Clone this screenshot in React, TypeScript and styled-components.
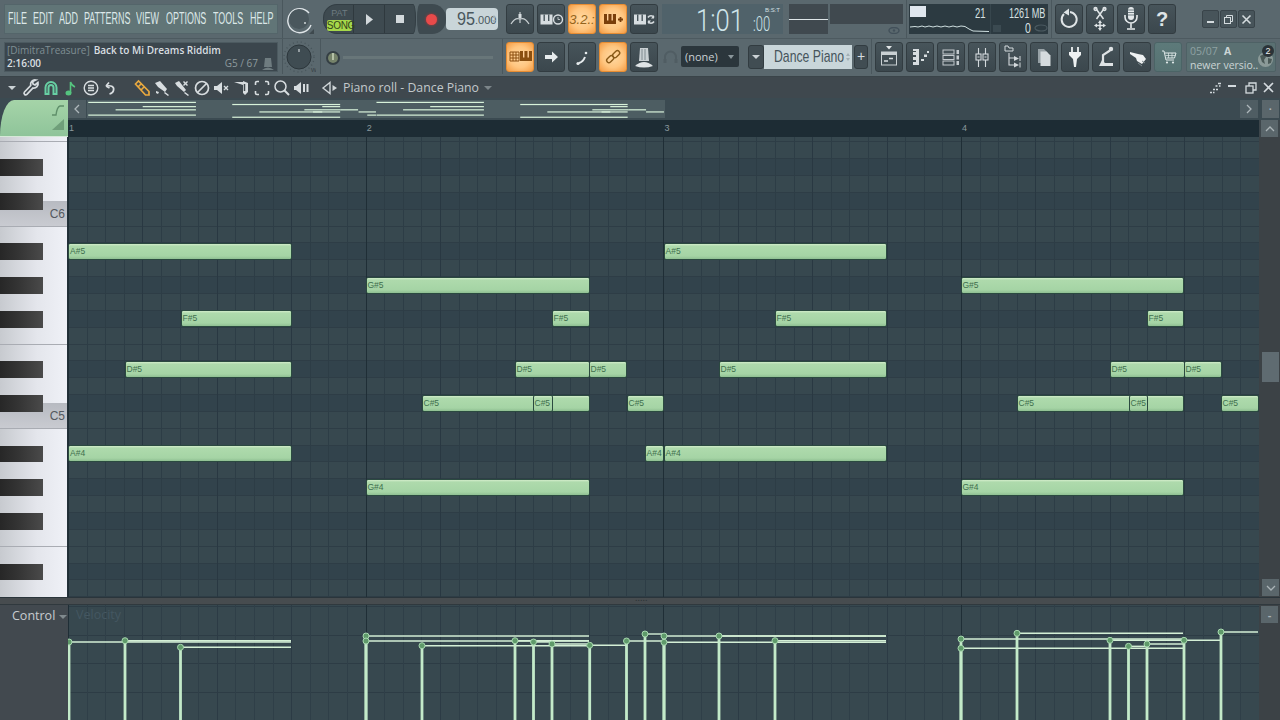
import React from "react";
import styled, { createGlobalStyle } from "styled-components";

const Global = createGlobalStyle`
  html, body { margin: 0; padding: 0; background: #36474f; }
  * { box-sizing: border-box; }
`;

const Page = styled.div`
  width: 1280px; height: 720px; overflow: hidden; display: flex; flex-direction: column;
  font-family: "Open Sans", "Liberation Sans", sans-serif; background: #3f484e;
`;
const Header = styled.header`
  height: 77px; background: #5a686e; border-bottom: 1px solid #3a4449; flex: none;
`;
const Row = styled.div<{ $second?: boolean }>`
  height: ${(p) => (p.$second ? 37 : 38)}px; display: flex; align-items: center; padding-left: 4px;
  ${(p) => (p.$second ? "border-top: 1px solid #4d5a60; padding-bottom: 1px;" : "")}
`;
const Sep = styled.div<{ $ml: number }>`
  width: 1px; margin-right: -1px; margin-left: ${(p) => p.$ml}px; align-self: stretch; background: #4a575d;
`;
const At = styled.div<{ $ml?: number }>`
  display: flex; align-items: center; flex: none; margin-left: ${(p) => p.$ml ?? 0}px;
`;
const Narrow = styled.span<{ $s: number }>`
  display: inline-block; white-space: nowrap; transform: scaleX(${(p) => p.$s}); transform-origin: left center;
`;
const Menu = styled.nav`
  width: 274px; height: 30px; background: #617577; border: 1px solid #54656a; display: flex; align-items: center;
  font: 16px "Liberation Sans", sans-serif; color: #dce8e8;
`;
const MenuItem = styled.div<{ $w: number; $ml: number }>`
  width: ${(p) => p.$w}px; margin-left: ${(p) => p.$ml}px; flex: none;
`;
const KnobSvg = styled.svg`
  display: block; flex: none;
`;
const Transport = styled.div`
  width: 93px; height: 30px; background: #3e4a50; border: 1px solid #333e44; border-radius: 14px 3px 3px 14px / 14px; display: flex;
`;
const PatSong = styled.div`
  width: 30px; display: flex; flex-direction: column; align-items: center; justify-content: space-between;
  font: 9px "Liberation Sans", sans-serif; border-right: 1px solid #2f393e; padding: 3px 0 2px 2px;
  color: #6d7b80;
`;
const SongTag = styled.div`
  width: 25px; height: 11px; background: #a6d84a; color: #34451a; text-align: center; line-height: 11px; border-radius: 2px;
  font-size: 10px; letter-spacing: -0.3px;
`;
const TransportBtn = styled.div`
  width: 31px; display: flex; align-items: center; justify-content: center; color: #d3d9dc;
  & + & { border-left: 1px solid #2f393e; }
`;
const RecordBtn = styled.div`
  width: 29px; height: 30px; background: #3e4a50; border-radius: 3px 14px 14px 3px / 14px; display: flex; align-items: center; justify-content: center; margin-left: 1px;
`;
const RecordDot = styled.div`
  width: 11px; height: 11px; border-radius: 50%; background: #e84a4a; box-shadow: 0 0 3px #b33;
`;
const Tempo = styled.div`
  width: 52px; height: 22px; background: #c9d5d9; border-radius: 4px; color: #4a575d; display: flex; align-items: baseline; padding: 1px 0 0 11px;
  font: 18px/20px "Liberation Sans", sans-serif; position: relative;
`;
const TempoSmall = styled.span`
  font-size: 11px; position: absolute; left: 29px; top: 2px;
`;
const Spin = styled.div`
  position: absolute; right: 2px; top: 50%; transform: translateY(-50%); display: flex; flex-direction: column; gap: 2px;
`;
const SpinUp = styled.span`
  width: 0; height: 0; border: 2.5px solid transparent; border-top: 0; border-bottom: 3px solid #a3b0b5;
`;
const SpinDown = styled.span`
  width: 0; height: 0; border: 2.5px solid transparent; border-bottom: 0; border-top: 3px solid #a3b0b5;
`;
const ButtonGroup = styled.div<{ $ml?: number }>`
  display: flex; gap: 3px; margin-left: ${(p) => p.$ml ?? 0}px; flex: none;
`;
const ToolButton = styled.div<{ $on?: boolean; $tint?: boolean }>`
  width: 28px; height: 30px; border-radius: 3px; display: flex; align-items: center; justify-content: center; flex: none; position: relative;
  background: ${(p) =>
    p.$on
      ? "radial-gradient(circle at 50% 50%, #ffd9a3 0%, #ffc680 55%, #f49b43 100%)"
      : p.$tint
      ? "linear-gradient(#5d7a7a, #567272)"
      : "linear-gradient(#47545a, #3b474d)"};
  border: 1px solid ${(p) => (p.$on ? "#e78d33" : p.$tint ? "#4b6466" : "#323c41")};
  color: #dfe4e6;
  font: italic 13px "Liberation Sans", sans-serif;
`;
const BtnSvg = styled.svg`
  display: block; width: 26px; height: 28px; overflow: visible;
`;
const Time = styled.div`
  width: 121px; height: 30px; background: #50626a; margin-left: 4px; position: relative; flex: none; color: #cfe5ea;
  font-family: Roboto, "Liberation Sans", sans-serif; font-weight: 300; display: flex;
`;
const TimeBig = styled.div`
  width: 57px; margin-left: 34px; font-size: 32px; line-height: 32px; height: 30px;
`;
const TimeSmall = styled.div`
  font-size: 21px; line-height: 41px; height: 30px;
`;
const TimeTag = styled.div`
  position: absolute; left: 103px; top: 2px; font: 6px/8px "Liberation Sans", sans-serif; color: #d4e0e4;
`;
const Scope = styled.div`
  width: 39px; height: 30px; background: #40494f; margin-left: 6px; display: flex; align-items: center; flex: none;
`;
const ScopeLine = styled.div`
  height: 1px; width: 100%; background: #dfe6e8;
`;
const Wave = styled.div`
  width: 73px; margin-left: 2px; height: 30px; flex: none; display: flex; flex-direction: column; align-items: flex-end;
`;
const WaveBox = styled.div`
  width: 100%; height: 20px; background: #40494f; flex: none;
`;
const EyeIcon = styled.svg`
  margin: 3px 3px 0 0;
`;
const Cpu = styled.div`
  width: 139px; height: 30px; background: #2c3a41; display: flex; color: #d6e0e2; flex: none; margin-left: 3px;
  font: 14px/14px "Liberation Sans", sans-serif;
`;
const CpuLeft = styled.div`
  width: 82px; display: flex; flex-direction: column; border-right: 1px solid #37464d;
`;
const CpuTop = styled.div`
  height: 15px; display: flex; justify-content: space-between; padding: 2px 0 0 1px;
`;
const CpuBar = styled.div`
  width: 16px; height: 11px; background: #dfe6ee;
`;
const CpuRight = styled.div`
  flex: 1; display: flex; flex-direction: column; padding: 2px 0 0 18px;
`;
const CpuLow = styled.div`
  display: flex; align-items: center; margin: 1px 0 0 -16px;
`;
const CpuSquare = styled.div`
  width: 8px; height: 7px; background: #3b4a51; margin-right: 24px; flex: none;
`;
const WindowBtn = styled.div`
  width: 17px; height: 18px; background: #47545a; border: 1px solid #39444a; border-radius: 2px; display: flex; align-items: center; justify-content: center; margin-right: 1px; color: #d4dbde;
`;
const Hint = styled.div`
  width: 274px; height: 30px; background: #3b464d; border: 1px solid #4c5a60; padding: 1px 2px 0; color: #d9dfe1;
  font-size: 10px; line-height: 13px; display: flex; flex-direction: column; justify-content: space-between; flex: none; font-weight: 600;
`;
const HintLine = styled.div`
  display: flex; align-items: center; white-space: nowrap;
`;
const Dim = styled.span`
  color: #7f8e93; font-weight: 400; margin-right: 4px;
`;
const HintRight = styled.span`
  margin-left: auto; color: #8d9a9e; display: flex; align-items: center; gap: 4px; font-weight: 400; padding-right: 1px;
`;
const Track = styled.div`
  width: 150px; height: 3px; background: #687679; margin-left: 3px; flex: none;
`;
const Combo = styled.div`
  width: 58px; height: 21px; margin-left: 3px; background: #2b363c; border-radius: 2px; color: #c9d0d3; font: 11px/21px "Open Sans", sans-serif; padding-left: 4px; position: relative; flex: none;
`;
const ComboArrow = styled.span`
  position: absolute; right: 5px; top: 9px; border: 3.5px solid transparent; border-top: 4px solid #8a969b;
`;
const ArrowBtn = styled.div`
  width: 16px; height: 24px; margin-left: 9px; background: #414d53; border: 1px solid #323c41; border-radius: 3px; display: flex; align-items: center; justify-content: center; flex: none;
`;
const Down = styled.span<{ $c?: string }>`
  width: 0; height: 0; display: inline-block; border: 4px solid transparent; border-bottom: 0; border-top: 4px solid ${(p) => p.$c ?? "#cbd2d5"};
`;
const NameBox = styled.div`
  width: 88px; height: 24px; background: #c9d6da; color: #46545b; font: 17px/24px "Liberation Sans", sans-serif; padding-left: 10px; flex: none; white-space: nowrap; position: relative;
`;
const PlusBtn = styled.div`
  width: 14px; height: 24px; margin-left: 2px; background: #414d53; border: 1px solid #323c41; border-radius: 3px; color: #d5dcdf; text-align: center; font: 14px/21px "Liberation Sans", sans-serif; flex: none;
`;
const News = styled.div`
  width: 90px; height: 30px; background: #5a7072; margin-left: 4px; border: 1px solid #4e6165; border-radius: 2px; padding: 1px 3px; font-size: 10.5px; line-height: 14px; color: #cbd5d5; position: relative; flex: none;
`;
const NewsDate = styled.span`
  color: #8fa2a3; margin-right: 6px;
`;
const Badge = styled.div`
  position: absolute; right: 1px; top: 2px; width: 12px; height: 12px; border-radius: 50%; background: #2b3338; color: #eee; text-align: center; font: 9px/12px "Liberation Sans", sans-serif;
`;
const Globe = styled.svg`
  position: absolute; right: 2px; top: 9px;
`;
const TitleBar = styled.div`
  height: 21px; background: #3f484e; display: flex; align-items: center; padding-left: 8px; flex: none; color: #cdd3d6;
`;
const ArrowSlot = styled.div`
  width: 13px; display: flex;
`;
const ToolSlot = styled.div<{ $c?: string; $ml?: number }>`
  width: 20px; height: 20px; flex: none; color: ${(p) => p.$c ?? "#cfd5d8"}; margin-left: ${(p) => p.$ml ?? 0}px;
`;
const TitleText = styled.div`
  font-size: 12.3px; color: #c3c9cc; margin-left: 3px; margin-right: 5px; white-space: nowrap;
`;
const TitleRight = styled.div`
  margin-left: auto; display: flex; padding-right: 3px;
`;
const WinSlot = styled.div`
  width: 18px; height: 20px; color: #d4dade;
`;
const Roll = styled.div`
  display: grid; grid-template-columns: 68px 1191px 21px; grid-template-rows: 22px 17px 460px 8px 115px; flex: none;
`;
const CornerCell = styled.div`
  grid-column: 1; grid-row: 1 / span 2; background: #3b4a51; padding-top: 2px; display: flex;
`;
const Corner = styled.div`
  flex: 1; background: linear-gradient(#a5d4a8, #8fc49a); border-radius: 14px 0 0 0 / 36px 0 0 0; border-bottom: 1px solid #d6e8d8; display: flex; flex-direction: column; align-items: flex-end; padding: 4px 3px 0 0; gap: 1px;
`;
const OverviewBar = styled.div`
  background: #3b4a51; padding: 2px 1px 2px 0; display: flex; gap: 1px;
`;
const StripBtn = styled.div<{ $end?: boolean }>`
  width: 18px; height: 18px; background: #4f5d63; display: flex; align-items: center; justify-content: center; color: #aeb7bb; flex: none; margin-left: ${(p) => (p.$end ? "auto" : "0")};
  font: 11px/18px "Liberation Sans", sans-serif;
`;
const OverviewClip = styled.svg`
  width: 578px; height: 18px; background: #4d5d62; display: block; flex: none;
`;
const SideCell = styled.div`
  background: #3b4a51; padding: 2px 2px 0 3px;
`;
const SideBtn = styled.div<{ $h?: number }>`
  width: 17px; height: ${(p) => p.$h ?? 17}px; background: #5a666b; display: flex; align-items: center; justify-content: center; color: #aab3b7; font: bold 11px "Liberation Sans", sans-serif; flex: none;
`;
const Ruler = styled.div`
  background: #1d2c34; display: flex; overflow: hidden;
`;
const RulerCell = styled.div`
  width: 297.7px; flex: none; font: 9px/17px "Liberation Sans", sans-serif; color: #8a989c; padding-left: 1px;
`;
const RulerCorner = styled.div`
  background: #3d464b; padding-left: 2px;
`;
const Keys = styled.div`
  background: linear-gradient(90deg, #c7cacf, #e4e6ec 55%, #eff1f7); border-right: 1px solid #233139; overflow: hidden;
`;
const RowsOffset = styled.div`
  margin-top: -11.45px;
`;
const KeyRow = styled.div<{ $line?: boolean }>`
  height: 16.85px; position: relative; ${(p) => (p.$line ? "border-bottom: 1px solid #a9acb3;" : "")}
`;
const BlackKey = styled.div`
  position: absolute; left: 0; top: 0; width: 43px; height: 100%; background: linear-gradient(90deg, #272727, #333 40%, #4a4a4a); z-index: 2;
`;
const CShade = styled.div`
  position: absolute; left: 0; right: 0; bottom: 0; height: 25px; background: linear-gradient(#b7bac1, #c9cbd1); color: #54595f; z-index: 1;
  font: 12px/26px "Liberation Sans", sans-serif; text-align: right; padding-right: 2px;
`;
const Canvas = styled.div`
  position: relative; overflow: hidden; background: #37484f;
  &::after {
    content: ""; position: absolute; inset: 0; pointer-events: none; z-index: 1;
    background-image:
      repeating-linear-gradient(90deg, #1f2e36 0 1px, transparent 1px 297.7px),
      repeating-linear-gradient(90deg, #293842 0 1px, transparent 1px 74.42px),
      repeating-linear-gradient(90deg, #2d3d46 0 1px, transparent 1px 18.605px);
  }
`;
const GridRow = styled.div<{ $black?: boolean }>`
  height: 16.85px; background: ${(p) => (p.$black ? "#32434c" : "#37484f")}; border-bottom: 1px solid #2e3d46;
`;
const Note = styled.div`
  position: absolute; height: 17px; z-index: 2; border: 1px solid #2b4a40; border-radius: 2px; overflow: hidden;
  background: linear-gradient(#d2ecca 0, #aedaac 14%, #a5d4a5 80%, #8fbf92 100%);
  font: 8.5px/15px "Liberation Sans", sans-serif; color: #3f6f4e; padding-left: 1px; white-space: nowrap;
`;
const VScroll = styled.div`
  background: #3c4246; padding: 0 2px 1px 3px; display: flex; flex-direction: column;
`;
const Thumb = styled.div`
  width: 17px; height: 30px; background: #5f6b71; margin-top: 215px; flex: none;
`;
const DownSlot = styled.div`
  margin-top: auto;
`;
const Splitter = styled.div`
  grid-column: 1 / -1; background: #474c4f; border-top: 1px solid #2a353b; border-bottom: 1px solid #30393e; display: flex; justify-content: center; padding-left: 3px; color: #2d3336; font: bold 7px/1px "Liberation Sans", sans-serif; letter-spacing: 0.6px;
`;
const Control = styled.div`
  background: #42494f; padding: 2px 0 0 12px; color: #c7ccd0; font-size: 12.5px; display: flex; align-items: flex-start; gap: 4px; line-height: 18px;
`;
const ControlArrow = styled.span`
  margin-top: 8px; display: flex;
`;
const Velocity = styled.div`
  position: relative; background: #37484f; overflow: hidden;
  background-image:
    repeating-linear-gradient(90deg, #1f2e36 0 1px, transparent 1px 297.7px),
    repeating-linear-gradient(90deg, #2c3b45 0 1px, transparent 1px 74.42px),
    repeating-linear-gradient(90deg, #2f3f48 0 1px, transparent 1px 18.605px),
    repeating-linear-gradient(0deg, transparent 0 27.4px, #2d3c45 27.4px 28.4px);
`;
const VelLabel = styled.div`
  position: absolute; left: 8px; top: 1px; font-size: 12.5px; color: #445761; line-height: 18px;
`;
const VelSvg = styled.svg`
  position: absolute; left: 0; top: 0; display: block;
`;
const ControlSide = styled.div`
  background: #3c4246; padding: 1px 0 0 2px;
`;

/* data */
const KOFF = { "A#5": 0, "G#5": 2, "F#5": 4, "D#5": 7, "C#5": 9, "A#4": 12, "G#4": 14 } as const;
type NL = keyof typeof KOFF;
const notes: [NL, number, number][] = [
  ["A#5", 68.5, 291], ["D#5", 125, 291], ["F#5", 181, 291], ["A#4", 68.5, 291],
  ["G#5", 366, 589], ["C#5", 422, 589], ["G#4", 366, 589], ["D#5", 515, 589], ["C#5", 533, 552], ["F#5", 552, 589], ["D#5", 589, 626], ["C#5", 627, 663], ["A#4", 645, 663],
  ["A#5", 664, 886], ["A#4", 664, 886], ["D#5", 719, 886], ["F#5", 775, 886],
  ["G#5", 961, 1183], ["G#4", 961, 1183], ["C#5", 1017, 1183], ["D#5", 1110, 1184], ["C#5", 1129, 1147], ["F#5", 1147, 1183], ["D#5", 1184, 1221], ["C#5", 1221, 1258],
];
const vel: [number, number, number][] = [
  [69, 642, 291], [125, 640.7, 291], [180.5, 647.3, 291],
  [366, 636, 589], [366, 641, 589], [422, 645.7, 589], [515, 640.7, 589], [533.5, 642, 552], [552, 644, 589], [589.7, 645.3, 626], [626.5, 641, 663], [645, 634, 663],
  [664, 636, 886], [664, 642.3, 886], [719, 636, 886], [775, 640.7, 886],
  [961, 639, 1183], [961, 648.3, 1183], [1017, 633.3, 1183], [1110, 640.3, 1184], [1128.5, 646.3, 1147], [1147, 644, 1183], [1184, 640.3, 1221], [1221, 632, 1258],
];
const rows = Array.from({ length: 29 }, (_, i) => i - 7);
const midi = (k: number) => 82 - k;
const isBlack = (k: number) => [1, 3, 6, 8, 10].includes(midi(k) % 12);

const Piano = ({ x, y, c = "#e4e8ea", bg = "#48555b" }: { x: number; y: number; c?: string; bg?: string }) => (
  <g>
    <rect x={x} y={y} width="12" height="10" fill={c} />
    <rect x={x + 3} y={y} width="1.4" height="6.5" fill={bg} />
    <rect x={x + 7.5} y={y} width="1.4" height="6.5" fill={bg} />
  </g>
);

const B = ({ children }: { children: React.ReactNode }) => (
  <BtnSvg viewBox="1 1 26 28" fill="none" stroke="none">{children}</BtnSvg>
);

const topIcons = [
  <B key="a"><g stroke="#c9d0d3" strokeWidth="1.2"><path d="M5 20 Q9 13 14 15 Q19 13 23 20" /><path d="M14 8 V19" /></g><rect x="12.5" y="10" width="3" height="4" fill="#d7dde0" /></B>,
  <B key="b"><Piano x={3.5} y={10.5} c="#d7dde0" /><circle cx="21" cy="15.5" r="4.5" stroke="#d7dde0" strokeWidth="1.4" /><path d="M21 13 V15.5 H23" stroke="#d7dde0" strokeWidth=".8" /></B>,
  <span key="c" style={{ color: "#94641c" }}>3.2.:</span>,
  <B key="d"><Piano x={5} y={10} c="#7a3f0a" bg="#ffd09a" /><path d="M19 15.5 h5 M21.5 13 v5" stroke="#7a3f0a" strokeWidth="1.8" /></B>,
  <B key="e"><Piano x={4} y={10.5} c="#d7dde0" /><path d="M18 13.5 a3.5 3.5 0 0 1 6 0 M24 17.5 a3.5 3.5 0 0 1 -6 0" stroke="#d7dde0" strokeWidth="1.6" /><path d="M24 11 v3.5 h-3 z M18 20 v-3.5 h3 z" fill="#d7dde0" /></B>,
];
const bottomIcons = [
  <B key="a"><g stroke="#8a4f10" strokeWidth="1"><path d="M4 10 h9 v9 h-9 z M4 13 h9 M4 16 h9 M7 10 v9 M10 10 v9" /></g><Piano x={14} y={9} c="#8a4f10" bg="#ffd09a" /></B>,
  <B key="b"><path d="M8 13 h7 v-3.5 l6 5.5 -6 5.5 v-3.5 h-7 z" fill="#e6ebed" /></B>,
  <B key="c"><path d="M11 21 q4 -1 6 -6" stroke="#e6ebed" strokeWidth="2" /><circle cx="10" cy="21.5" r="1.6" fill="#e6ebed" /><circle cx="18" cy="11" r="1.3" fill="#e6ebed" /></B>,
  <B key="d"><g stroke="#8a5a18" strokeWidth="1.4"><rect x="7" y="15" width="8" height="4.5" rx="2.2" transform="rotate(-45 11 17)" /><rect x="13" y="10" width="8" height="4.5" rx="2.2" transform="rotate(-45 17 12)" /></g></B>,
  <B key="e"><path d="M10 6 h8 l1 13 h-10 z" fill="#c9d0d3" /><path d="M12 7 v11 M15 7 v11" stroke="#7f8a8f" /><path d="M5 24 q9 -8 18 0 q-9 3 -18 0 z" fill="#dfe4e6" /></B>,
];
const sysIcons = [
  <B key="a"><path d="M9 10 a7.5 7.5 0 1 0 6 -2" stroke="#dfe4e6" strokeWidth="2" /><path d="M14 4.5 v7 l-5.5 -3 z" fill="#dfe4e6" /></B>,
  <B key="b"><g stroke="#dfe4e6" strokeWidth="1.5"><path d="M9.5 4 L17.5 15 M18.5 4 L10.5 15" /><circle cx="9.5" cy="5" r="1.4" /><circle cx="18.5" cy="5" r="1.4" /></g><path d="M14 18 v7 M10 21.5 h8" stroke="#dfe4e6" strokeWidth="1.5" /><path d="M14 16 l2 3 h-4z M14 27 l2 -3 h-4z M8 21.5 l3 -2 v4z M20 21.5 l-3 -2 v4z" fill="#dfe4e6" /></B>,
  <B key="c"><rect x="11" y="3" width="6" height="13" rx="3" fill="#e5eaec" /><path d="M11 6 h6 M11 8.5 h6 M11 11 h6" stroke="#6f7c81" /><path d="M8 11 v2 a6 6 0 0 0 12 0 v-2 M14 19 v5 M10 25 h8" stroke="#e5eaec" strokeWidth="1.6" /></B>,
  <span key="d" style={{ font: "bold 20px 'Liberation Sans'", color: "#dfe4e6" }}>?</span>,
];
const panelIcons = [
  <B key="a"><path d="M11 4 h6 l-3 3.5 z" fill="#e2e6e8" /><rect x="6.5" y="10" width="15" height="13" stroke="#c9d0d3" strokeWidth="1" /><rect x="6.5" y="10" width="15" height="3" fill="#c9d0d3" /><path d="M9 19 h4 M14 16.5 h4" stroke="#d7dde0" strokeWidth="1.4" /></B>,
  <B key="b"><path d="M7 7 h6 v16 h-6 v-3 h3 v-2 h-3 v-3 h3 v-2 h-3 v-3 h3 v-1 h-3 z" fill="#d7dde0" /><path d="M15 19 h3 v-2 h-3z M18 15 h3 v-2.5 h-3z M21 11 h2 v-2 h-2z" fill="#d7dde0" /></B>,
  <B key="c"><g stroke="#c3cace" strokeWidth="1"><rect x="6" y="8" width="11" height="4" /><rect x="6" y="13.5" width="11" height="4" /><rect x="6" y="19" width="11" height="4" /></g><path d="M19.5 8 h2.5 v4 h-2.5z M19.5 13.5 h2.5 v4 h-2.5z M19.5 19 h2.5 v4 h-2.5z" fill="#c3cace" /></B>,
  <B key="d"><g stroke="#d3d9dc" strokeWidth="1.1"><path d="M10.5 6 V12 M10.5 18 V25 M17.5 6 V12 M17.5 18 V25" /><rect x="8" y="12" width="5" height="6" /><rect x="15" y="12" width="5" height="6" /></g><path d="M9.5 15 h2 M16.5 15 h2" stroke="#d3d9dc" /></B>,
  <B key="e"><path d="M6 4 h3 l1 2 h4 v3 h-8 z" stroke="#d3d9dc" strokeWidth="1" /><path d="M10 11 V23 H15 M10 16 H15" stroke="#d3d9dc" strokeWidth="1.1" /><path d="M15 14 l5 2.5 -5 2.5 z M15 20.5 l5 2.5 -5 2.5 z" fill="#d3d9dc" /><path d="M21 14 v5 M21 20.5 v5" stroke="#d3d9dc" strokeWidth="1" /></B>,
  <B key="f"><path d="M8 7 h6 l4 4 v10 h-10 z" fill="#97a1a6" /><path d="M10.5 9.5 h6 l4 4 v10.5 h-10 z" fill="#d5dbde" /></B>,
  <B key="g"><path d="M11 5 v5 M17 5 v5" stroke="#eef1f2" strokeWidth="1.8" /><path d="M8 10 h12 v3 l-4 4 -1 8 h-2 l-1 -8 -4 -4 z" fill="#eef1f2" /></B>,
  <B key="h"><circle cx="19" cy="7" r="2.2" fill="#dfe3e5" /><path d="M18 8.5 L11 13 V21" stroke="#dfe3e5" strokeWidth="2.2" /><path d="M10 18 l3 3 h8 v3 h-14 z" fill="#dfe3e5" /></B>,
  <B key="i"><path d="M7 10 l8 2 5 1 3 4 -4 5 -5 -3 -1 -3 -6 -4 z" fill="#eef1f2" /><path d="M15 21 l4 3 M19 19 l3 2" stroke="#7d898e" /></B>,
  <B key="j"><path d="M8 9 h2 l2 9 h8 M11 11 h11 l-1.5 5 h-8" stroke="#dfe8e8" strokeWidth="1" /><path d="M14.5 11 v5 M18 11 v5 M11.5 13.5 h10" stroke="#dfe8e8" strokeWidth=".7" /><circle cx="13" cy="20.5" r="1.1" fill="#dfe8e8" /><circle cx="19" cy="20.5" r="1.1" fill="#dfe8e8" /></B>,
];
const I = ({ children, fill = "none", sw = 1.5 }: { children: React.ReactNode; fill?: string; sw?: number }) => (
  <svg width="20" height="20" viewBox="0 0 20 20" fill={fill} stroke={fill === "none" ? "currentColor" : "none"} strokeWidth={sw}>{children}</svg>
);
const tools1 = [
  { c: "#d8dde0", n: <I sw={1.7}><path d="M17 4.5 l-3 2.5 -2 -1 -.3 -2.5 3 -1.5 a4.5 4.5 0 0 0 -5 5.5 L3.5 14 a1.7 1.7 0 0 0 2.4 2.4 L12 10 a4.5 4.5 0 0 0 5 -5.5 z" /></I> },
  { c: "#67cfa3", n: <I sw={2}><path d="M4.5 16 V9.5 a5.5 5.5 0 0 1 11 0 V16 h-3 V9.5 a2.5 2.5 0 0 0 -5 0 V16 z" /></I> },
  { c: "#55c47f", n: <I sw={1.6}><path d="M9.5 15 V4 q1 3.5 4.5 5" /><ellipse cx="7.5" cy="15" rx="2.2" ry="1.7" fill="currentColor" /></I> },
  { c: "#d8dde0", n: <I sw={1.4}><circle cx="10" cy="10" r="6.8" /><path d="M7 7.5 h6 M7 10 h6 M7 12.5 h6" /></I> },
  { c: "#d8dde0", n: <I sw={1.7}><path d="M5 8 L8 4.5 M5 8 L8.5 10" /><path d="M5.5 8 c5 -1 8 1 7 4.5 -.5 2 -2 3 -4 3.5" /></I> },
];
const tools2 = [
  { c: "#e9a93f", n: <I sw={1.7}><path d="M3.5 6 L6.5 3 L17 13.5 L17 17 L13.5 17 Z M6 9 L9.5 5.5 M9 12 L12 9" /></I> },
  { c: "#d8dde0", n: <I fill="#d8dde0"><path d="M3 5 l5 -2 7 8 -2 3 -7 -5 z M13 14 l4 3 -1 1 -4 -3 z M4 13 l3 1 -1 2 -2 -1 z" /></I> },
  { c: "#d8dde0", n: <I fill="#d8dde0"><path d="M3 5 l4 -2 7 9 -2 2 -7 -6 z M15 3 l1 1 -1.5 1.5 1.5 1.5 -1 1 -1.5 -1.5 -1.5 1.5 -1 -1 1.5 -1.5 -1.5 -1.5 1 -1 1.5 1.5 z M13 14 l4 3 -1 1 -4 -3 z" /></I> },
  { c: "#d8dde0", n: <I sw={1.7}><circle cx="10" cy="10" r="6.5" /><path d="M5.5 14.5 L14.5 5.5" /></I> },
  { c: "#d8dde0", n: <I fill="#d8dde0"><path d="M2 8 h3 l5 -4 v12 l-5 -4 h-3 z" /><path d="M12 8 l4 4 M16 8 l-4 4" stroke="#d8dde0" strokeWidth="1.4" /></I> },
  { c: "#d8dde0", n: <I fill="#d8dde0"><path d="M2 4 h9 v3 z M11 3 l5 2 v9 l-3 3 -2 -2 z" /><path d="M12.5 6 v7" stroke="#3f484e" /></I> },
  { c: "#d8dde0", n: <I sw={1.6}><path d="M3.5 7 V5 a1.5 1.5 0 0 1 1.5 -1.5 H7 M13 3.5 h2 a1.5 1.5 0 0 1 1.5 1.5 V7 M16.5 13 v2 a1.5 1.5 0 0 1 -1.5 1.5 H13 M7 16.5 H5 a1.5 1.5 0 0 1 -1.5 -1.5 V13" /></I> },
  { c: "#d8dde0", n: <I sw={1.5}><circle cx="8.5" cy="8.5" r="5.5" /><path d="M12.5 12.5 L17 17" strokeWidth="2" /></I> },
  { c: "#d8dde0", n: <I fill="#d8dde0"><path d="M2 8 h2 l5 -4 v12 l-5 -4 h-2 z" /><rect x="11" y="6" width="2" height="8" /><rect x="14.5" y="6" width="2" height="8" /></I> },
];

const MenuItems: [string, number, number][] = [["FILE", 25, 3], ["EDIT", 26, 0], ["ADD", 25, 0], ["PATTERNS", 52, 0], ["VIEW", 30, 0], ["OPTIONS", 47, 0], ["TOOLS", 37, 0], ["HELP", 24, 0]];

export default function App() {
  return (
    <Page>
      <Global />
      <Header>
        <Row>
          <Menu>
            {MenuItems.map(([t, w, ml]) => (
              <MenuItem key={t} $w={w} $ml={ml}><Narrow $s={0.56}>{t}</Narrow></MenuItem>
            ))}
          </Menu>
          <Sep $ml={4} />
          <At $ml={4}>
            <KnobSvg width="28" height="30" viewBox="0 0 28 30" fill="none">
              <path d="M23 9 A12 12 0 1 0 25 21" stroke="#dfe5e8" strokeWidth="1.4" />
              <circle cx="13" cy="15" r="10" fill="#4a575d" />
              <circle cx="19" cy="19" r="1" fill="#cfd6d9" />
              <path d="M28 30 h-5 l5 -5 z" fill="#3e494e" />
            </KnobSvg>
          </At>
          <At $ml={9}>
            <Transport>
              <PatSong><span>PAT</span><SongTag>SONG</SongTag></PatSong>
              <TransportBtn>
                <svg width="9" height="13" viewBox="0 0 9 13"><path d="M1 1 L8 6.5 L1 12 z" fill="#d3d9dc" /></svg>
              </TransportBtn>
              <TransportBtn>
                <svg width="8" height="8"><rect width="8" height="8" fill="#d3d9dc" /></svg>
              </TransportBtn>
            </Transport>
            <RecordBtn><RecordDot /></RecordBtn>
          </At>
          <At>
            <Tempo>
              <Narrow $s={0.9}>95</Narrow>
              <TempoSmall>.000</TempoSmall>
              <Spin><SpinUp /><SpinDown /></Spin>
            </Tempo>
          </At>
          <ButtonGroup $ml={8}>
            {topIcons.map((n, i) => (
              <ToolButton key={i} $on={i === 2 || i === 3}>{n}</ToolButton>
            ))}
          </ButtonGroup>
          <Time>
            <TimeBig><Narrow $s={0.8}>1:01</Narrow></TimeBig>
            <TimeSmall><Narrow $s={0.62}>:00</Narrow></TimeSmall>
            <TimeTag>B:S:T</TimeTag>
          </Time>
          <Scope><ScopeLine /></Scope>
          <Wave>
            <WaveBox />
            <EyeIcon width="12" height="7" viewBox="0 0 12 7" fill="none"><ellipse cx="6" cy="3.5" rx="5" ry="3" stroke="#42505a" strokeWidth="1.4" /><circle cx="6" cy="3.5" r="1.2" fill="#42505a" /></EyeIcon>
          </Wave>
          <Sep $ml={3} />
          <Cpu>
            <CpuLeft>
              <CpuTop>
                <CpuBar />
                <span style={{ width: 15 }}><Narrow $s={0.68}>21</Narrow></span>
              </CpuTop>
              <svg width="81" height="14" viewBox="0 0 81 14" fill="none">
                <path d="M1 8 L6 7.5 L9 8 L13 7 L16 8 L20 7 L24 8 L28 7 L32 8 L36 7 L40 8 L44 7 L48 8 L52 7 L56 7.5 L60 10 L64 12 L80 12.5" stroke="#cfdfe0" strokeWidth="1" />
              </svg>
            </CpuLeft>
            <CpuRight>
              <div><Narrow $s={0.65}>1261 MB</Narrow></div>
              <CpuLow>
                <CpuSquare />
                <span style={{ width: 9 }}><Narrow $s={0.75}>0</Narrow></span>
                <svg width="14" height="8" viewBox="0 0 14 8" fill="none"><ellipse cx="7" cy="4" rx="6" ry="3" stroke="#4b5a61" strokeWidth="1.2" /></svg>
              </CpuLow>
            </CpuRight>
          </Cpu>
          <Sep $ml={3} />
          <ButtonGroup $ml={4}>
            {sysIcons.map((n, i) => (
              <ToolButton key={i}>{n}</ToolButton>
            ))}
          </ButtonGroup>
          <At $ml={26}>
            <WindowBtn><svg width="10" height="10"><rect x="1" y="7" width="7" height="2" fill="#d4dbde" /></svg></WindowBtn>
            <WindowBtn><svg width="11" height="11" fill="none" stroke="#d4dbde"><rect x="1.5" y="3.5" width="6" height="6" /><path d="M3.5 3 V1.5 H9.5 V7.5 H8" /></svg></WindowBtn>
            <WindowBtn><svg width="11" height="11" stroke="#d4dbde" strokeWidth="1.6"><path d="M1.5 1.5 L9.5 9.5 M9.5 1.5 L1.5 9.5" /></svg></WindowBtn>
          </At>
        </Row>
        <Row $second>
          <Hint>
            <HintLine><Dim>[DimitraTreasure]</Dim>Back to Mi Dreams Riddim</HintLine>
            <HintLine>
              2:16:00
              <HintRight>
                G5 / 67
                <svg width="12" height="14" viewBox="0 0 12 14"><path d="M3 1 h6 l1 9 h-8 z M0 13 q6 -5 12 0 z" fill="#6f7c80" /></svg>
              </HintRight>
            </HintLine>
          </Hint>
          <Sep $ml={4} />
          <At $ml={1}>
            <KnobSvg width="33" height="32" viewBox="0 0 33 32" fill="none">
              <circle cx="16" cy="16" r="15" stroke="#48555b" strokeDasharray="1 3" strokeWidth="1.4" />
              <circle cx="16" cy="16" r="12" fill="#3f4c52" stroke="#2c363b" />
              <path d="M16 8 v3" stroke="#cfd6d9" strokeWidth="1.2" />
              <text x="28" y="31" fontSize="8" fill="#39444a" fontFamily="Liberation Sans">w</text>
            </KnobSvg>
          </At>
          <Sep $ml={4} />
          <At $ml={6}>
            <KnobSvg width="14" height="16" viewBox="0 0 14 16" style={{ marginTop: 2 }}>
              <circle cx="7" cy="8" r="7" fill="#353f44" />
              <circle cx="7" cy="8" r="5" fill="#76836a" />
              <path d="M7 3 V10" stroke="#d8e4c8" strokeWidth="1.3" />
            </KnobSvg>
            <Track style={{ marginTop: 2 }} />
          </At>
          <Sep $ml={9} />
          <ButtonGroup $ml={4}>
            {bottomIcons.map((n, i) => (
              <ToolButton key={i} $on={i === 0 || i === 3}>{n}</ToolButton>
            ))}
          </ButtonGroup>
          <At $ml={5}>
            <svg width="15" height="16" viewBox="0 0 15 16" fill="none" stroke="#505d63" strokeWidth="2"><path d="M2 12 V8 a5.5 5.5 0 0 1 11 0 V12" /><path d="M2 10 v4 M13 10 v4" strokeWidth="3" /></svg>
          </At>
          <Combo>(none)<ComboArrow /></Combo>
          <ArrowBtn><Down /></ArrowBtn>
          <NameBox>
            <Narrow $s={0.72}>Dance Piano</Narrow>
            <Spin><SpinUp /><SpinDown /></Spin>
          </NameBox>
          <PlusBtn>+</PlusBtn>
          <Sep $ml={3} />
          <ButtonGroup $ml={4}>
            {panelIcons.map((n, i) => (
              <ToolButton key={i} $tint={i === 9}>{n}</ToolButton>
            ))}
          </ButtonGroup>
          <News>
            <div><NewsDate>05/07</NewsDate><b>A</b></div>
            <div>newer versio..</div>
            <Globe width="15" height="15" viewBox="0 0 15 15"><circle cx="7.5" cy="7.5" r="7.5" fill="#8b9a98" /><path d="M2 4 l4 -2 2 3 -2 3 1 4 -3 -2z M10 6 l4 1 -1 4 -3 1z" fill="#4b5a58" /></Globe>
            <Badge>2</Badge>
          </News>
        </Row>
      </Header>
      <TitleBar>
        <ArrowSlot><Down /></ArrowSlot>
        {tools1.map((t, i) => <ToolSlot key={i} $c={t.c}>{t.n}</ToolSlot>)}
        {tools2.map((t, i) => <ToolSlot key={i} $c={t.c} $ml={i === 0 ? 11 : 0}>{t.n}</ToolSlot>)}
        <ToolSlot $ml={8}>
          <I sw={1.4}><path d="M3 10 L10 4.5 V15.5 Z" /><path d="M12.5 7 L17 10 L12.5 13 Z" fill="currentColor" stroke="none" /></I>
        </ToolSlot>
        <TitleText>Piano roll - Dance Piano</TitleText>
        <Down $c="#7c8589" />
        <TitleRight>
          <WinSlot><I sw={1.4}><path d="M5 14.5 h2 M8 14.5 h1.5 M8 11.5 h2 M11 11.5 h2 M10.5 8 h2 M14 8 h1.5 M13 5.5 h3" /></I></WinSlot>
          <WinSlot><I sw={2}><path d="M5 8 H13" /></I></WinSlot>
          <WinSlot><I sw={1.3}><rect x="5" y="8" width="7" height="7" /><path d="M8 8 V5 H15 V12 H12" /></I></WinSlot>
          <WinSlot><I sw={1.6}><path d="M5 5 L14 14 M14 5 L5 14" /></I></WinSlot>
        </TitleRight>
      </TitleBar>
      <Roll>
        <CornerCell>
          <Corner>
            <svg width="14" height="12" viewBox="0 0 14 12" fill="none"><path d="M1 11 h4 q1 -8 4 -9 h4" stroke="#5f8f6a" strokeWidth="1.4" /></svg>
            <svg width="14" height="14" viewBox="0 0 14 14"><path d="M1 13 L13 2 V13 z" fill="#6f9f7a" /></svg>
          </Corner>
        </CornerCell>
        <OverviewBar>
          <StripBtn>
            <svg width="8" height="10" fill="none" stroke="#aeb7bb" strokeWidth="1.3"><path d="M6 1 L2 5 L6 9" /></svg>
          </StripBtn>
          <OverviewClip viewBox="87 0 578 18">
            {notes.map(([l, x, e], i) => (
              <rect key={i} x={88 + (x - 68) * 0.484} width={(e - x) * 0.484} y={1.8 + KOFF[l] * 1.06} height="1.2" fill="#d8f2da" />
            ))}
          </OverviewClip>
          <StripBtn $end>
            <svg width="8" height="10" fill="none" stroke="#aeb7bb" strokeWidth="1.3"><path d="M2 1 L6 5 L2 9" /></svg>
          </StripBtn>
        </OverviewBar>
        <SideCell><SideBtn $h={18}>·</SideBtn></SideCell>
        <Ruler>
          {[1, 2, 3, 4, 5].map((n) => <RulerCell key={n}>{n}</RulerCell>)}
        </Ruler>
        <RulerCorner>
          <SideBtn>
            <svg width="10" height="6" fill="none" stroke="#aab3b7" strokeWidth="1.3"><path d="M1 5 L5 1 L9 5" /></svg>
          </SideBtn>
        </RulerCorner>
        <Keys>
          <RowsOffset>
            {rows.map((k) => {
              const m = midi(k) % 12;
              return (
                <KeyRow key={k} $line={m === 0 || m === 5}>
                  {isBlack(k) && <BlackKey />}
                  {m === 0 && <CShade>{`C${Math.floor(midi(k) / 12) - 1}`}</CShade>}
                </KeyRow>
              );
            })}
          </RowsOffset>
        </Keys>
        <Canvas>
          <RowsOffset>
            {rows.map((k) => <GridRow key={k} $black={isBlack(k)} />)}
          </RowsOffset>
          {notes.map(([l, x, e], i) => (
            <Note key={i} style={{ left: x - 68.5, top: 106 + KOFF[l] * 16.85, width: e - x + 1 }}>{l}</Note>
          ))}
        </Canvas>
        <VScroll>
          <Thumb />
          <DownSlot>
            <SideBtn>
              <svg width="10" height="6" fill="none" stroke="#aab3b7" strokeWidth="1.3"><path d="M1 1 L5 5 L9 1" /></svg>
            </SideBtn>
          </DownSlot>
        </VScroll>
        <Splitter>.....</Splitter>
        <Control>Control<ControlArrow><Down $c="#808a8e" /></ControlArrow></Control>
        <Velocity>
          <VelLabel>Velocity</VelLabel>
          <VelSvg width="1191" height="115" viewBox="68 605 1191 115" fill="none">
            {vel.map(([x, y, e], i) => (
              <g key={i}>
                <path d={`M${x} ${y} H${e}`} stroke="#d4efd6" strokeWidth="1.4" />
                <path d={`M${x} ${y} V720`} stroke="#c3eac9" strokeWidth="2.8" />
              </g>
            ))}
            {vel.map(([x, y], i) => (
              <circle key={i} cx={x} cy={y} r="3" fill="#5f9a6a" stroke="#a8d8b0" strokeWidth="1" />
            ))}
          </VelSvg>
        </Velocity>
        <ControlSide>
          <SideBtn>-</SideBtn>
        </ControlSide>
      </Roll>
    </Page>
  );
}
